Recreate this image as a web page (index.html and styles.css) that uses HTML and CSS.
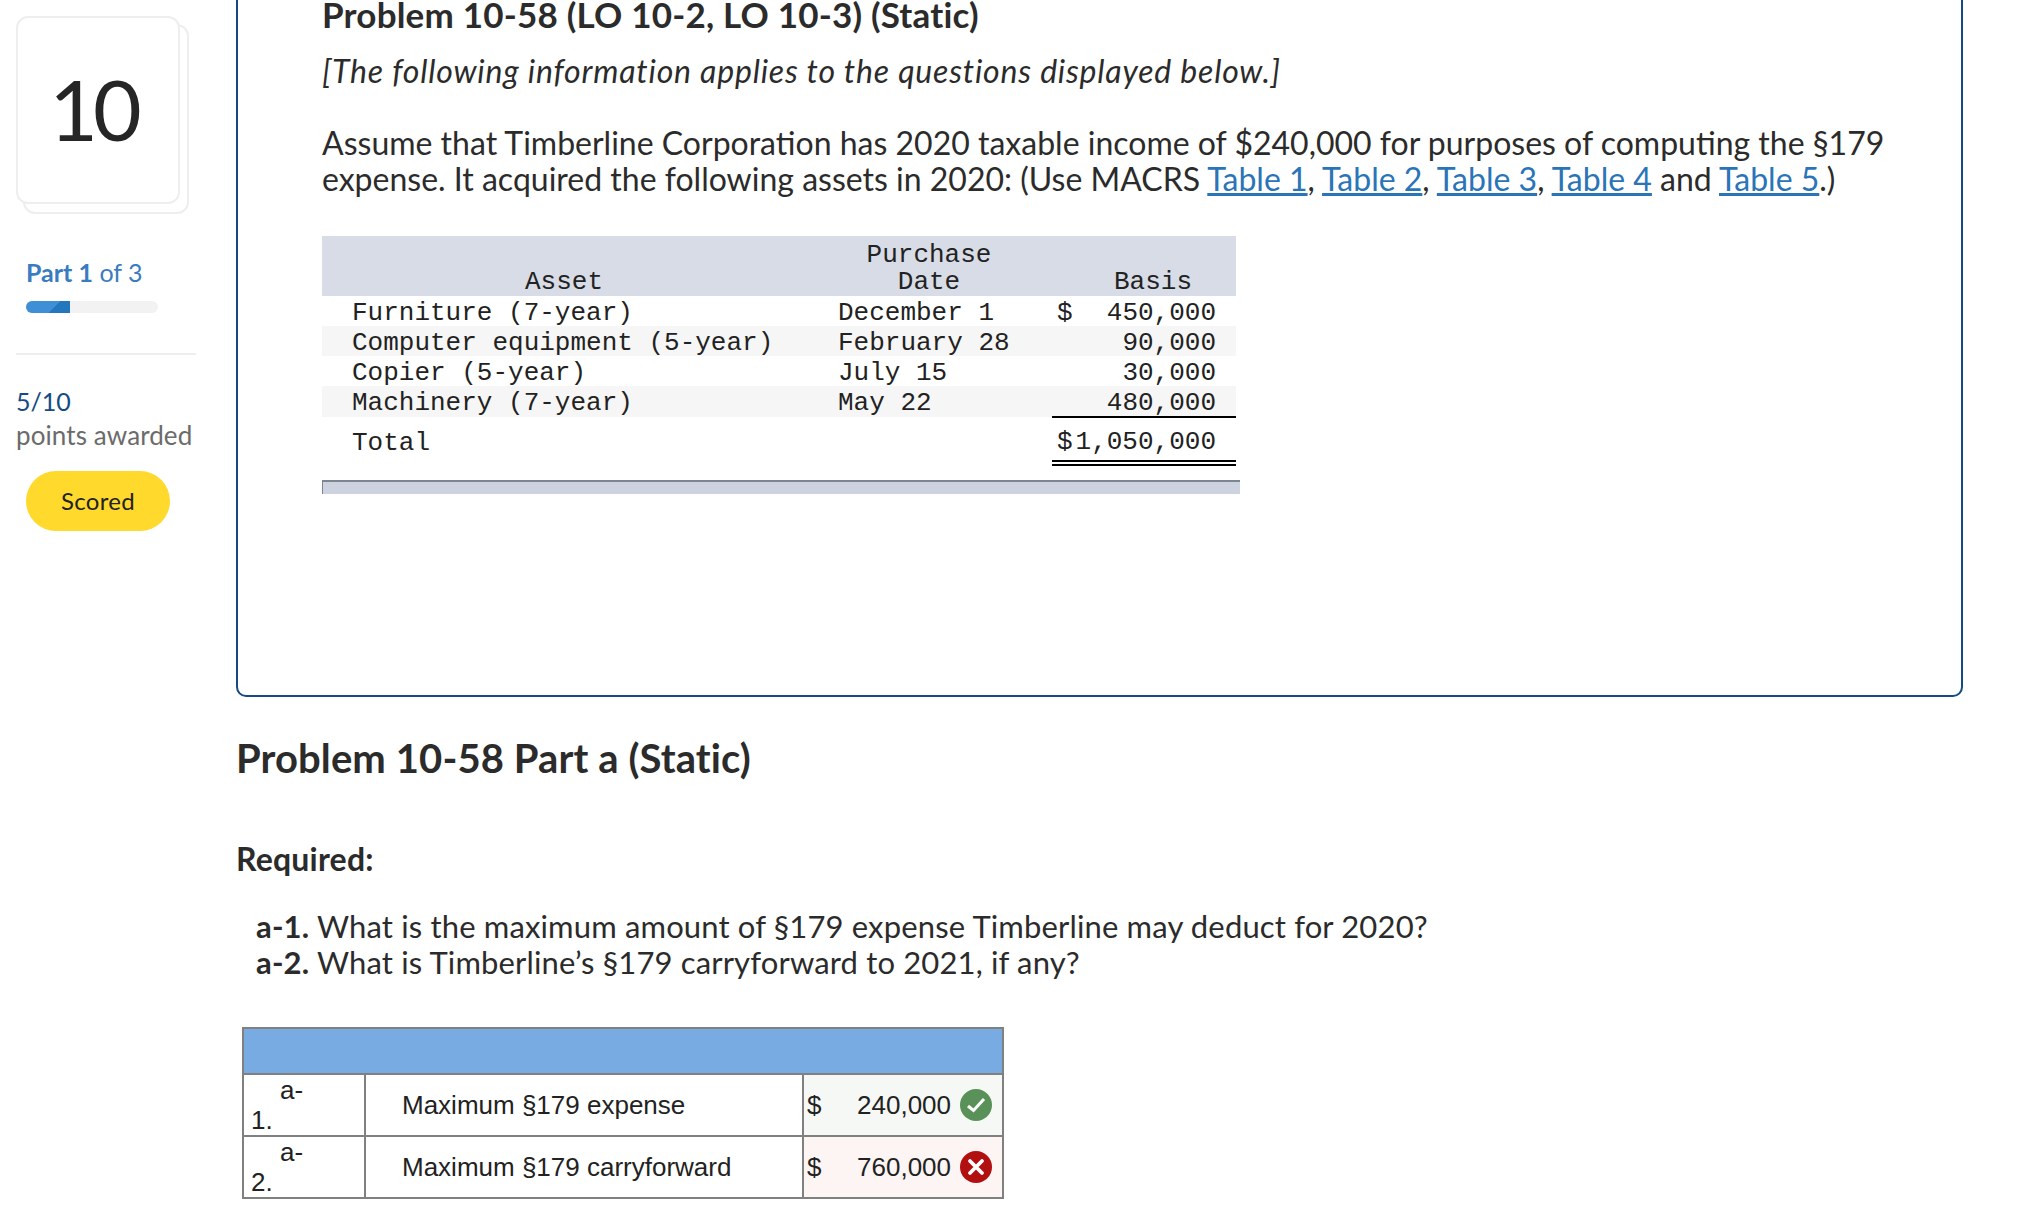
FILE: index.html
```html
<!DOCTYPE html>
<html>
<head>
    <title>Problem 10-58</title>
    <link rel="stylesheet" href="styles.css">
</head>
<body>

<div class="page">
    <div class="sidebar">
        <div class="cardStack">
            <div class="cardBack"></div>
            <div class="card">10</div>
        </div>
        <div class="partLabel"><b>Part 1</b> of 3</div>
        <div class="progress"><div class="progressFill"></div></div>
        <div class="divider"></div>
        <div class="points">5/10</div>
        <div class="pointsLabel">points awarded</div>
        <div class="scored">Scored</div>
    </div>

    <div class="content">
        <div class="infoBox">
            <h2 class="problemTitle">Problem 10-58 (LO 10-2, LO 10-3) (Static)</h2>
            <p class="intro">[The following information applies to the questions displayed below.]</p>
            <p class="text">Assume that Timberline Corporation has 2020 taxable income of $240,000 for purposes of computing the §179 expense. It acquired the following assets in 2020: (Use MACRS <a href="#">Table 1</a>, <a href="#">Table 2</a>, <a href="#">Table 3</a>, <a href="#">Table 4</a> and <a href="#">Table 5</a>.)</p>

            <table class="assets">
                <colgroup>
                    <col class="widthAsset">
                    <col class="widthDate">
                    <col class="widthBasis">
                </colgroup>
                <thead>
                    <tr>
                        <th>Asset</th>
                        <th>Purchase<br>Date</th>
                        <th class="basisHead">Basis</th>
                    </tr>
                </thead>
                <tbody>
                    <tr>
                        <td class="colAsset">Furniture (7-year)</td>
                        <td class="colDate">December 1</td>
                        <td class="colBasis"><span class="dollar">$</span>450,000</td>
                    </tr>
                    <tr class="shaded">
                        <td class="colAsset">Computer equipment (5-year)</td>
                        <td class="colDate">February 28</td>
                        <td class="colBasis">90,000</td>
                    </tr>
                    <tr>
                        <td class="colAsset">Copier (5-year)</td>
                        <td class="colDate">July 15</td>
                        <td class="colBasis">30,000</td>
                    </tr>
                    <tr class="shaded lastRow">
                        <td class="colAsset">Machinery (7-year)</td>
                        <td class="colDate">May 22</td>
                        <td class="colBasis">480,000</td>
                    </tr>
                    <tr class="totalRow">
                        <td class="colAsset">Total</td>
                        <td class="colDate"></td>
                        <td class="colBasis"><span class="dollar">$</span>1,050,000</td>
                    </tr>
                </tbody>
            </table>
            <div class="tableFoot"></div>
        </div>

        <h2 class="partTitle">Problem 10-58 Part a (Static)</h2>
        <p class="required">Required:</p>
        <div class="questions">
            <div><b>a-1.</b> What is the maximum amount of §179 expense Timberline may deduct for 2020?</div>
            <div><b>a-2.</b> What is Timberline’s §179 carryforward to 2021, if any?</div>
        </div>

        <table class="answers">
            <colgroup>
                <col class="widthKey">
                <col class="widthName">
                <col class="widthValue">
            </colgroup>
            <tr class="answerHead">
                <td colspan="3"></td>
            </tr>
            <tr>
                <td class="answerKey">a-<br>1.</td>
                <td class="answerName">Maximum §179 expense</td>
                <td class="correct">
                    <div class="answerValue">
                        <span>$</span>
                        <span class="amount">240,000</span>
                        <svg class="mark" viewBox="0 0 32 32">
                            <circle cx="16" cy="16" r="16" fill="#5a9159"/>
                            <path d="M8 17l5.5 4.5L24 10" fill="none" stroke="#fff" stroke-width="3"/>
                        </svg>
                    </div>
                </td>
            </tr>
            <tr>
                <td class="answerKey">a-<br>2.</td>
                <td class="answerName">Maximum §179 carryforward</td>
                <td class="wrong">
                    <div class="answerValue">
                        <span>$</span>
                        <span class="amount">760,000</span>
                        <svg class="mark" viewBox="0 0 32 32">
                            <circle cx="16" cy="16" r="16" fill="#b20f10"/>
                            <path d="M10 10l12 12M22 10L10 22" fill="none" stroke="#fff" stroke-width="3.8" stroke-linecap="round"/>
                        </svg>
                    </div>
                </td>
            </tr>
        </table>
    </div>
</div>

</body>
</html>
```

FILE: styles.css
```css
html, body {
    margin: 0;
    height: 1230px;
    overflow: hidden;
    background-color: white;
}

body {
    font-family: "Lato", "Open Sans", sans-serif;
    color: #2b2b2b;
}

.page {
    display: grid;
    grid-template-columns: 236px 1727px;
}

/* left column */
.sidebar {
    padding: 16px 0 0 16px;
}

.cardStack {
    position: relative;
    width: 173px;
    height: 197px;
}

.card, .cardBack {
    position: absolute;
    box-sizing: border-box;
    width: 164px;
    height: 188px;
    border: 2px solid #eeeeee;
    border-radius: 12px;
    background-color: white;
}

.card {
    left: 0;
    top: 0;
    padding-right: 10px;
    text-align: center;
    font-size: 84px;
    letter-spacing: -5px;
    line-height: 182px;
    color: #262626;
}

.cardBack {
    left: 7px;
    top: 8px;
    width: 166px;
    height: 190px;
}

.partLabel {
    margin: 44px 0 0 10px;
    font-size: 25px;
    line-height: 30px;
    color: #3a7cc0;
}

.progress {
    width: 132px;
    height: 12px;
    margin: 14px 0 0 10px;
    border-radius: 6px;
    background-color: #f2f2f2;
    overflow: hidden;
}

.progressFill {
    width: 44px;
    height: 12px;
    background: linear-gradient(135deg, #3f8fd6 0, #3f8fd6 62%, #2377bd 62%);
}

.divider {
    width: 180px;
    height: 2px;
    margin-top: 40px;
    background-color: #eeeeee;
}

.points {
    margin-top: 30px;
    font-size: 25px;
    line-height: 32px;
    color: #154a85;
}

.pointsLabel {
    margin-top: 2px;
    font-size: 26px;
    letter-spacing: 0.1px;
    line-height: 32px;
    color: #6b6b6b;
}

.scored {
    width: 144px;
    height: 60px;
    margin: 20px 0 0 10px;
    border-radius: 30px;
    background-color: #ffd92c;
    color: #222222;
    font-size: 24px;
    letter-spacing: 0.3px;
    line-height: 60px;
    text-align: center;
}

/* right column */
.infoBox {
    box-sizing: border-box;
    height: 733px;
    margin-top: -36px;
    padding: 28px 40px 0 84px;
    border: 2px solid #154a85;
    border-radius: 10px;
}

.problemTitle {
    margin: 0;
    font-size: 35px;
    letter-spacing: 0.2px;
    line-height: 40px;
    font-weight: bold;
}

.intro {
    margin: 19px 0 0 0;
    font-size: 32px;
    letter-spacing: 0.8px;
    line-height: 36px;
    font-style: italic;
}

.text {
    margin: 36px 0 0 0;
    font-size: 32px;
    line-height: 36px;
}

.text a {
    color: #2a74b8;
}

.assets {
    width: 914px;
    margin-top: 39px;
    border-collapse: collapse;
    table-layout: fixed;
    font-family: "Liberation Mono", monospace;
    font-size: 26px;
    color: #222222;
}

.widthAsset {
    width: 484px;
}

.widthDate {
    width: 246px;
}

.widthBasis {
    width: 184px;
}

.assets th {
    height: 60px;
    padding: 0;
    vertical-align: bottom;
    background-color: #d8dce6;
    font-weight: normal;
    line-height: 27px;
    text-align: center;
}

.assets th.basisHead {
    padding-left: 18px;
}

.assets td {
    box-sizing: border-box;
    height: 30px;
    padding: 4px 0 0 0;
    vertical-align: top;
    line-height: 26px;
    white-space: nowrap;
}

.assets .shaded td {
    background-color: #f6f6f6;
}

.assets td.colAsset {
    padding-left: 30px;
}

.assets td.colDate {
    padding-left: 32px;
}

.assets td.colBasis {
    padding-left: 5px;
    padding-right: 20px;
    text-align: right;
}

.dollar {
    float: left;
}

.assets .lastRow td {
    height: 31px;
}

.assets .lastRow td.colBasis {
    border-bottom: 2px solid black;
}

.assets .totalRow td {
    height: 46px;
    padding-top: 13px;
}

.assets .totalRow td.colBasis {
    padding-top: 11px;
    border-bottom: 6px double black;
}

.tableFoot {
    box-sizing: border-box;
    width: 918px;
    height: 14px;
    margin-top: 14px;
    border-top: 2px solid #7d8492;
    border-left: 1px solid #7d8492;
    background-color: #ccd2e0;
}

.partTitle {
    margin: 41px 0 0 0;
    font-size: 40px;
    letter-spacing: 0.1px;
    line-height: 40px;
    font-weight: bold;
}

.required {
    margin: 63px 0 0 0;
    font-size: 32px;
    letter-spacing: 0.2px;
    line-height: 36px;
    font-weight: bold;
}

.questions {
    margin: 31px 0 0 20px;
    font-size: 31px;
    letter-spacing: 0.15px;
    line-height: 36px;
}

.answers {
    width: 760px;
    margin: 47px 0 0 6px;
    border-collapse: collapse;
    table-layout: fixed;
    font-family: "Liberation Sans", Arial, sans-serif;
    font-size: 26px;
    line-height: 30px;
    color: #222222;
}

.widthKey {
    width: 122px;
}

.widthName {
    width: 438px;
}

.widthValue {
    width: 200px;
}

.answers td {
    border: 2px solid #808080;
    padding: 0;
    white-space: nowrap;
}

.answerHead td {
    height: 44px;
    background-color: #77abe2;
}

.answers .answerKey {
    height: 60px;
    padding-left: 7px;
    text-indent: 29px;
    vertical-align: top;
}

.answers .answerName {
    padding-left: 36px;
}

.answerValue {
    display: flex;
    align-items: center;
    height: 60px;
    padding: 0 10px 0 3px;
}

.correct {
    background-color: #f6f8f5;
}

.wrong {
    background-color: #fdf5f4;
}

.amount {
    margin-left: auto;
}

.mark {
    width: 32px;
    height: 32px;
    margin-left: 9px;
}
```
